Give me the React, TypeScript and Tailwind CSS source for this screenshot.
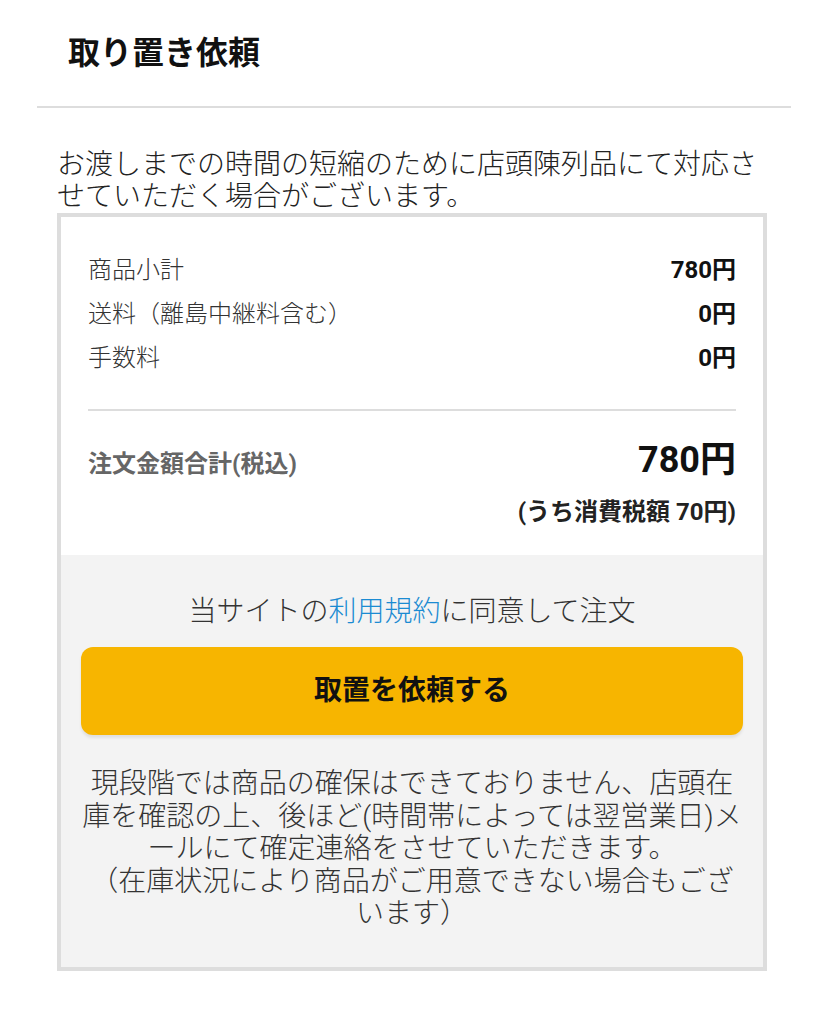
import React from "react";

const FONT = "font-['Roboto','Noto_Sans_CJK_JP',sans-serif]";

export default function App() {
  return (
    <div className={`${FONT} bg-white w-[828px] min-h-[1018px] text-[#222]`}>
      <div className="px-[37px]">
        <div className="h-[106px] flex items-center pl-[31px]">
          <h1 className="text-[32px] font-bold leading-none text-[#111]">取り置き依頼</h1>
        </div>
        <div className="h-[2px] bg-[#dddddd]" />
      </div>

      <p className="mt-[41px] pl-[57px] text-[28px] leading-[32px] font-light text-[#222]">
        お渡しまでの時間の短縮のために店頭陳列品にて対応さ
        <br />
        せていただく場合がございます。
      </p>

      <div className="ml-[57px] w-[710px] border-4 border-[#dddddd]">
        <div className="bg-white px-[27px] pt-[31px] pb-[28px]">
          <div className="flex flex-col">
            <div className="h-[44px] flex items-center justify-between text-[24px]">
              <span className="font-light text-[#333]">商品小計</span>
              <span className="font-bold text-[#111]">780円</span>
            </div>
            <div className="h-[44px] flex items-center justify-between text-[24px]">
              <span className="font-light text-[#333]">送料（離島中継料含む）</span>
              <span className="font-bold text-[#111]">0円</span>
            </div>
            <div className="h-[44px] flex items-center justify-between text-[24px]">
              <span className="font-light text-[#333]">手数料</span>
              <span className="font-bold text-[#111]">0円</span>
            </div>
          </div>
          <div className="mt-[29px] h-[2px] bg-[#dddddd]" />
          <div className="mt-[25px] flex items-baseline justify-between">
            <span className="text-[24px] font-bold text-[#666]">注文金額合計(税込)</span>
            <span className="text-[36px] leading-[48px] font-bold text-[#111]">780円</span>
          </div>
          <div className="mt-[13px] text-right text-[24px] leading-[30px] font-bold text-[#222]">
            (うち消費税額 70円)
          </div>
        </div>

        <div className="bg-[#f3f3f3] px-[20px] pt-[39px] pb-[36px]">
          <p className="text-center text-[28px] leading-[36px] font-light text-[#333]">
            当サイトの<span className="text-[#1b8bd2]">利用規約</span>に同意して注文
          </p>
          <button className="mt-[17px] w-full h-[88px] rounded-[12px] bg-[#f7b500] shadow-[0_3px_3px_rgba(0,0,0,0.08)] flex items-center justify-center">
            <span className="text-[28px] font-bold text-[#111]">取置を依頼する</span>
          </button>
          <p className="mt-[33px] text-center text-[28px] leading-[32.5px] font-light text-[#333]">
            現段階では商品の確保はできておりません、店頭在
            <br />
            庫を確認の上、後ほど(時間帯によっては翌営業日)メ
            <br />
            ールにて確定連絡をさせていただきます。
            <br />
            （在庫状況により商品がご用意できない場合もござ
            <br />
            います）
          </p>
        </div>
      </div>
    </div>
  );
}
